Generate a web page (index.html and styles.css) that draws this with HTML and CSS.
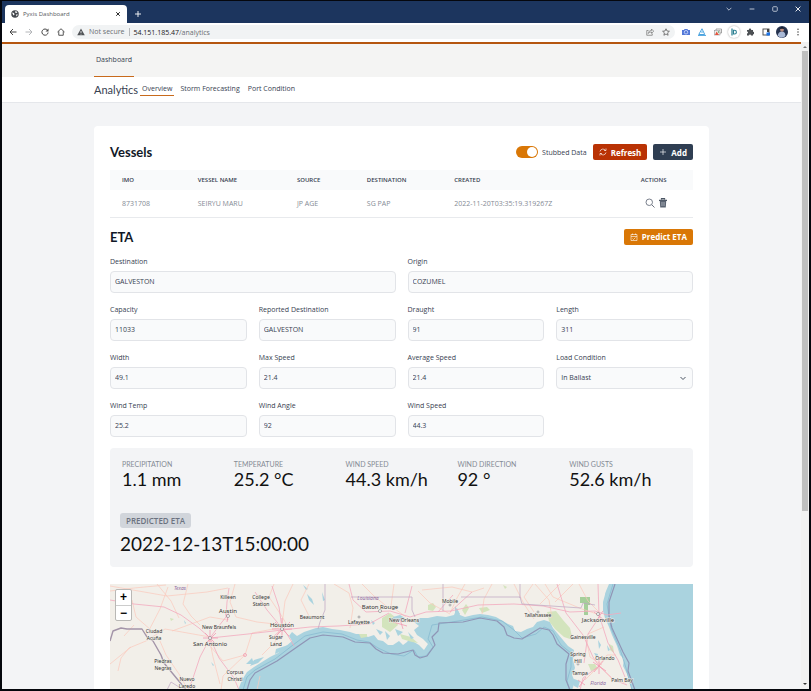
FILE: index.html
```html
<!DOCTYPE html>
<html lang="en">
<head>
    <meta charset="UTF-8">
    <meta name="viewport" content="width=device-width, initial-scale=1.0">
    <title>Pyxis Dashboard</title>
    <link rel="stylesheet" href="styles.css">
</head>
<body>
    <div class="window">
        <!-- Title bar -->
        <div class="titlebar">
            <div class="tab">
                <svg class="icon" viewBox="0 0 16 16"><circle cx="8" cy="8" r="7.500" fill="#45494e"/><path d="M2 5l4 1 1 3-2 2zM9 2l-1 3 3 1 2-2M10 9l4 0-3 4z" fill="#fff"/></svg>
                <span class="tab-title">Pyxis Dashboard</span>
                <button class="plain" aria-label="Close tab"><svg class="icon-sm" viewBox="0 0 10 10"><path d="M2 2l6 6M8 2l-6 6" stroke="#222" stroke-width="1.6"/></svg></button>
            </div>
            <button class="plain new-tab" aria-label="New tab"><svg class="icon-sm" viewBox="0 0 10 10"><path d="M5 0v10M0 5h10" stroke="#fff" stroke-width="1.5"/></svg></button>
            <div class="window-buttons">
                <button class="plain" aria-label="Tabs"><svg class="icon-sm" viewBox="0 0 10 10"><path d="M1 3l4 4 4-4" fill="none" stroke="#ccd3df" stroke-width="1.4"/></svg></button>
                <button class="plain" aria-label="Minimize"><svg class="icon-sm" viewBox="0 0 10 10"><path d="M1 5h8" stroke="#ccd3df" stroke-width="1.5"/></svg></button>
                <button class="plain" aria-label="Maximize"><svg class="icon-sm" viewBox="0 0 10 10"><rect x="1.2" y="1.2" width="7.6" height="7.6" rx="1.5" fill="none" stroke="#ccd3df" stroke-width="1.4"/></svg></button>
                <button class="plain" aria-label="Close"><svg class="icon-sm" viewBox="0 0 10 10"><path d="M1 1l8 8M9 1l-8 8" stroke="#fff" stroke-width="1.5"/></svg></button>
            </div>
        </div>

        <!-- Address bar -->
        <div class="toolbar">
            <div class="toolbar-nav">
                <button class="plain" aria-label="Back"><svg class="icon" viewBox="0 0 16 16"><path d="M15 8H2M8 2L2 8l6 6" fill="none" stroke="#444" stroke-width="2"/></svg></button>
                <button class="plain" aria-label="Forward"><svg class="icon" viewBox="0 0 16 16"><path d="M1 8h13M8 2l6 6-6 6" fill="none" stroke="#b4b6b9" stroke-width="2"/></svg></button>
                <button class="plain" aria-label="Reload"><svg class="icon" viewBox="0 0 16 16"><path d="M13 4.5A6.2 6.2 0 1 0 14.2 9" fill="none" stroke="#444" stroke-width="2"/><path d="M15 1v6H9z" fill="#444"/></svg></button>
                <button class="plain" aria-label="Home"><svg class="icon" viewBox="0 0 16 16"><path d="M1 8l7-6.5L15 8M3.5 6.5V14.5h9V6.500" fill="none" stroke="#444" stroke-width="1.8"/></svg></button>
            </div>
            <div class="address">
                <svg class="icon" viewBox="0 0 16 16"><path d="M8 1l7.500 13.500H.5z" fill="#505356"/><path d="M8 6v4M8 11.500v1.500" stroke="#fff" stroke-width="1.500"/></svg>
                <span class="insecure">Not secure</span>
                <span class="url"><b>54.151.185.47</b>/analytics</span>
                <button class="plain" aria-label="Share"><svg class="icon" viewBox="0 0 16 16"><path d="M5 5H1.500v9.500h11V11M4.500 11c0-4 3-6 6.500-6V2l4.500 4.500L11 10.500V8C8 8 6 9 4.500 11z" fill="none" stroke="#666" stroke-width="1.300"/></svg></button>
                <button class="plain star" aria-label="Bookmark"><svg class="icon" viewBox="0 0 16 16"><path d="M8 1.500l2 4.500 4.800.5-3.600 3.200 1 4.800L8 12l-4.200 2.500 1-4.800L1.200 6.500 6 6z" fill="none" stroke="#555" stroke-width="1.500"/></svg></button>
            </div>
            <div class="extensions">
                <svg class="icon" viewBox="0 0 16 16"><path d="M0 4h4l1-2h6l1 2h4v10H0z" fill="#5479d8"/><circle cx="8" cy="8.500" r="3.500" fill="none" stroke="#dce5ff" stroke-width="1.500"/></svg>
                <svg class="icon" viewBox="0 0 16 16"><path d="M8 1.500L1.500 13h12z" fill="none" stroke="#4aa3df" stroke-width="2"/><path d="M8 6v4M0 15h16" stroke="#4aa3df" stroke-width="1.800"/></svg>
                <svg class="icon" viewBox="0 0 16 16"><path d="M4 5V2h11v8h-3" fill="none" stroke="#888" stroke-width="1.500"/><rect x="1" y="5" width="11" height="9" fill="#eee" stroke="#888"/><path d="M2 14l3-7 5 7z" fill="#e5533d"/><circle cx="9" cy="8" r="1.500" fill="#4f9d54"/></svg>
                <span class="round"><svg class="icon" viewBox="0 0 16 16"><path d="M4 1v14" stroke="#2b7f91" stroke-width="2.500"/><path d="M7 4.500h2a3.800 3.800 0 0 1 0 7.600H7z" fill="none" stroke="#2b7f91" stroke-width="2.200"/></svg></span>
                <svg class="icon" viewBox="0 0 16 16"><path d="M2 4h4a2.200 2.200 0 1 1 4 0h4v4a2.200 2.200 0 1 1 0 4v3h-4a2 2 0 1 0-4 0H2v-4a2 2 0 1 0 0-4z" fill="#4c5054"/></svg>
                <svg class="icon" viewBox="0 0 16 16"><rect x="2" y="2" width="12" height="12" fill="none" stroke="#444" stroke-width="1.800"/><path d="M10 2h4v6h-4z" fill="#444"/><path d="M9 9h7v6H9z" fill="#1a73e8"/></svg>
                <svg class="avatar" viewBox="0 0 22 22"><circle cx="11" cy="11" r="11" fill="#26334f"/><path d="M3 18c1-6 4-8 8-8s7 3 6 9a11 11 0 0 1-14-1z" fill="#a9b9d6"/><circle cx="11" cy="7" r="3.500" fill="#b98d80"/><path d="M7 5c2-4 7-3 8 0z" fill="#111827"/></svg>
                <svg class="icon dots" viewBox="0 0 16 16"><circle cx="8" cy="2.500" r="1.600"/><circle cx="8" cy="8" r="1.600"/><circle cx="8" cy="13.500" r="1.600"/></svg>
            </div>
        </div>

        <div class="viewport">
            <div class="page">
                <nav class="main-nav"><a href="#" class="active">Dashboard</a></nav>
                <nav class="sub-nav">
                    <h1>Analytics</h1>
                    <a href="#" class="active">Overview</a>
                    <a href="#">Storm Forecasting</a>
                    <a href="#">Port Condition</a>
                </nav>

                <main class="card">
                    <div class="section-head">
                        <h2>Vessels</h2>
                        <label class="toggle"><input type="checkbox" checked>Stubbed Data</label>
                        <button class="btn red"><svg class="btn-icon" viewBox="0 0 16 16"><path d="M2 7a6 6 0 0 1 11-2M14 1v4h-4M14 9a6 6 0 0 1-11 2M2 15v-4h4" fill="none" stroke="#fff" stroke-width="1.300"/></svg>Refresh</button>
                        <button class="btn navy"><svg class="btn-icon" viewBox="0 0 16 16"><path d="M8 2v12M2 8h12" stroke="#fff" stroke-width="1.300"/></svg>Add</button>
                    </div>

                    <table class="vessels">
                        <thead>
                            <tr>
                                <th class="col-imo">IMO</th>
                                <th class="col-name">Vessel Name</th>
                                <th class="col-source">Source</th>
                                <th class="col-destination">Destination</th>
                                <th class="col-created">Created</th>
                                <th>Actions</th>
                            </tr>
                        </thead>
                        <tbody>
                            <tr>
                                <td>8731708</td>
                                <td>SEIRYU MARU</td>
                                <td>JP AGE</td>
                                <td>SG PAP</td>
                                <td>2022-11-20T03:35:19.319267Z</td>
                                <td>
                                    <div class="actions">
                                        <button class="plain" aria-label="View"><svg class="action-icon" viewBox="0 0 20 20"><circle cx="8.500" cy="8.500" r="6.500" fill="none" stroke="#6b7280" stroke-width="1.800"/><path d="M13.500 13.500L19 19" stroke="#6b7280" stroke-width="2"/></svg></button>
                                        <button class="plain" aria-label="Delete"><svg class="action-icon" viewBox="0 0 20 20"><path d="M7 3V1h6v2M2 4.500h16" fill="none" stroke="#4b5563" stroke-width="2.500"/><path d="M3.500 5h13l-1 14h-11z" fill="#5b6472"/><path d="M7.500 8v8M10 8v8M12.500 8v8" stroke="#c5cad1"/></svg></button>
                                    </div>
                                </td>
                            </tr>
                        </tbody>
                    </table>

                    <div class="section-head">
                        <h2>ETA</h2>
                        <button class="btn orange"><svg class="btn-icon" viewBox="0 0 16 16"><path d="M2 3h12v12H2zM2 7h12M5 1v3M11 1v3M5 11l2 2 4-4" fill="none" stroke="#fff" stroke-width="1.200"/></svg>Predict ETA</button>
                    </div>

                    <form class="eta-form">
                        <div class="field wide"><label for="destination">Destination</label><input id="destination" type="text" value="GALVESTON"></div>
                        <div class="field wide"><label for="origin">Origin</label><input id="origin" type="text" value="COZUMEL"></div>
                        <div class="field"><label for="capacity">Capacity</label><input id="capacity" type="text" value="11033"></div>
                        <div class="field"><label for="reported">Reported Destination</label><input id="reported" type="text" value="GALVESTON"></div>
                        <div class="field"><label for="draught">Draught</label><input id="draught" type="text" value="91"></div>
                        <div class="field"><label for="length">Length</label><input id="length" type="text" value="311"></div>
                        <div class="field"><label for="width">Width</label><input id="width" type="text" value="49.1"></div>
                        <div class="field"><label for="max-speed">Max Speed</label><input id="max-speed" type="text" value="21.4"></div>
                        <div class="field"><label for="avg-speed">Average Speed</label><input id="avg-speed" type="text" value="21.4"></div>
                        <div class="field">
                            <label for="load">Load Condition</label>
                            <div class="select-wrap">
                                <select id="load"><option>In Ballast</option><option>Laden</option></select>
                                <svg class="chevron" viewBox="0 0 10 10"><path d="M2.500 4l2.500 2.500L7.500 4" fill="none" stroke="#4b5563"/></svg>
                            </div>
                        </div>
                        <div class="field"><label for="wind-temp">Wind Temp</label><input id="wind-temp" type="text" value="25.2"></div>
                        <div class="field"><label for="wind-angle">Wind Angle</label><input id="wind-angle" type="text" value="92"></div>
                        <div class="field"><label for="wind-speed">Wind Speed</label><input id="wind-speed" type="text" value="44.3"></div>
                    </form>

                    <section class="results">
                        <dl class="stats">
                            <div><dt>Precipitation</dt><dd>1.1 mm</dd></div>
                            <div><dt>Temperature</dt><dd>25.2 °C</dd></div>
                            <div><dt>Wind Speed</dt><dd>44.3 km/h</dd></div>
                            <div><dt>Wind Direction</dt><dd>92 °</dd></div>
                            <div><dt>Wind Gusts</dt><dd>52.6 km/h</dd></div>
                        </dl>
                        <div class="prediction">
                            <span class="chip">Predicted ETA</span>
                            <p>2022-12-13T15:00:00</p>
                        </div>
                    </section>

                    <div class="map">
                        <svg class="map-canvas" viewBox="0 0 583 106" preserveAspectRatio="xMidYMin slice">
                            <rect width="583" height="106" fill="#aad3df"/>
                            <!-- land -->
                            <path d="M0 0H499L496 7 493 18 493 27 495 34 499 43 502 51 507 62 510 71 514 75 513 82 517 90 520 98 522 106H462L465 98 462 91 465 84 463 76 464 66 458 62 453 56 448 50 443 44 440 38 434 36 427 38 423 43 417 45 411 48 405 47 403 42 398 40 393 37 386 33 378 31 370 30 363 31 355 33 350 31 347 24 344 31 336 33 327 32 318 34 310 34 304 38 309 42 304 46 307 51 313 55 318 60 314 66 309 61 304 58 300 54 297 58 293 61 289 57 283 61 278 61 273 57 268 56 264 51 258 53 252 50 246 50 240 48 230 46 222 45 213 43 206 44 200 46 194 48 187 52 182 48 179 52 182 57 175 63 168 69 160 73 152 78 144 83 137 88 132 96 128 106H0z" fill="#f2efe9"/>
                            <!-- parks and wetlands -->
                            <g fill="#d3e4bd">
                                <path d="M437 28l9-1 7 9 7 8 3 12-9-3-9-8-6-8z"/>
                                <path d="M272 34l8-5 5 4 3 8-8 7-8-5zM318 21l5-2 3 4-3 4-5-1zM356 20l3 4-4 7-3-5zM369 24l8-1 3 3-8 3zM249 50l8 0 0 3-6 1zM290 50l11 3 7 6-6-1-10-3zM478 80l7 0 3 5-7 2zM499 60l4 2 1 7-4-3zM393 1l4 2-2 2zM60 34l4 1-3 2z"/>
                                <path d="M470 13h10v8h-2v10h-4V19h-4z" fill="#a5cf9a"/>
                            </g>
                            <!-- lakes and bays -->
                            <g fill="#aad3df">
                                <path d="M197 10l5 5 2 6-5-5zM212 8l3 8-2 1zM193 1l5 4-2 1zM261 36l4 3-2 2zM283 33l7-2 5 3-3 3-9-1zM345 22l5 8-5 1zM488 56l3 5-2 4zM497 61l3 5-2 1zM484 69l4 1-1 4zM495 8l3 8-3-1zM464 95l6 2-2 7-4-2zM266 45l7 3-3 3zM275 47l5 5-3 4zM285 45l8 3-5 4zM298 48l6 6-3 1zM166 65l12-4-4 5-9 4zM144 76l10-3-6 6-8 3zM136 80l6-6 2 6zM101 78l3 3-1 1zM74 36l2 3-1 1z"/>
                            </g>
                            <!-- near-shore line -->
                            <path d="M133 106l4-13 8-7 20-11 18-14 12-9 18-4 19 2 15 6 12 2 9 6 13 6 13 2 10-6 4 7 8-1 7-9-5-8 4-14 26-4 24-4 20 4 12 9 8 8 14-4 8-7 9 4 8 14 10 8 0 14-4 14 4 14M503 0l-6 20 4 24 10 24 5 16 6 22" fill="none" stroke="#8fc0d4"/>
                            <!-- maritime boundary -->
                            <path d="M137 106L140 96 145 89 167 77 187 63 200 54 213 51 233 53 245 58 260 59 266 65 273 69 288 70 303 66 305 71 310 74 317 72 325 61 322 53 328 47 329 39 353 38 370 34 387 37 394 43 397 51 404 54 412 55 430 44 439 46 443 51 447 60 459 70 456 80 456 96 460 106M505 0L499 18 499 32 502 44 513 68 519 79 518 87 525 106" fill="none" stroke="#8f95b6" stroke-width="1.200" stroke-linejoin="round"/>
                            <!-- roads -->
                            <g fill="none" stroke="#fac8bb" stroke-width=".7" stroke-linejoin="round">
                                <path d="M0 7L24 4 56 1M47 0l14 17 8 17M0 2l57 10 40-4 21-4M58 3l-8 22-14 27M78 0l-5 20 8 12 9 9M125 0l-5 18 6 15 21 5 27 3M164 0l-5 13 12 18 6 10M183 0l-8 17-3 24M224 0l15 9 4 15-3 20M252 0l12 12 17 14M199 0l-8 16 9 18M100 53L55 45 36 57 19 64 11 74 8 87M135 71l-22 6-13-15M135 71l7-22 27-5M135 71l-22 21-2 14M50 57l6 14 13 19 8 14M99 53l4 20 7 27M284 0l-3 22 15 11M312 6l30-3 20 5 12-4M340 30L320 19 308 7M355 0l-8 14-7 15M382 0l-8 15-2 15M404 0l10 20 10 15M423 0l-9 13 10 15M425 0l14 16 3 18M435 0l8 13 29 12 18 6M450 0l-20 20M463 0l-18 18M469 0l9 17 12 12M478 50l16-7M476 54l4 19 12 8M489 81l8-10 9 0M489 82l-14 14M489 81l13 14 14 4M152 71l13-13 4-11M147 106l3-14M62 47l38-14 18 3M0 80l21-17M24 41l-10 11M22 16l4 17 15 13"/>
                            </g>
                            <g fill="none" stroke="#f2aabe" stroke-width=".8" stroke-linejoin="round">
                                <path d="M0 16l24 4 30 3 17 8 18 13 11 10 38-4 34-4 28-3 28-1 31-2 20-11M100 54l8-11 8-10 1-15 2-14M100 54l9 20 15 20 5 12M100 54L90 73 82 97 78 106M172 44l-15-18-12-18M172 44l-3-21-7-21M173 44l7 11 4 7M173 44l-10 9M239 0l4 16 13 12 24-1 20 6 16-5 25-1 27-6 36-1 29 2 27 6 25-1 12 4 14-2M490 32L478 50 474 79M447 0l9 29 17 22 10 22 6 9M488 0l1 31 9 28 10 17 7 17M489 82l-16 12-3 12M489 82l15 14 13 5M302 2l-7 27M328 28l15-17M340 28l22-20"/>
                            </g>
                            <!-- city streets -->
                            <g fill="none" stroke="#f29ab2" stroke-width=".8">
                                <path d="M165 38l14 14M180 38l-14 14M172 34v20M162 45h20M95 49l11 11M106 49l-11 11M100 46v15M93 54h15M115 28l3 8M119 27l-2 11M484 28l10 8M493 27l-7 10M483 78l13 9M494 76l-10 12M489 73v17M468 96l7 5M476 93l-7 10M283 38l14 4M290 35l3 10"/>
                                <circle cx="135" cy="71" r="1.500"/>
                            </g>
                            <!-- borders -->
                            <g fill="none" stroke="#bda5c2" stroke-width="1" stroke-linejoin="round">
                                <path d="M0 57l3-10 8-3 6 1 15 0 5 8 6 4 8 14 3 8 14 17 9 11" stroke="#a394a8" stroke-width="1.400"/>
                                <path d="M215 0v26l-5 12-2 7M241 13h61v13l3 7M333 0v27M351 13h59l2 7 59 4 2-5 12 2M410 0v14M57 106l4-8 8 5" stroke-width=".7"/>
                            </g>
                            <g fill="#fff" stroke="#777" stroke-width=".6">
                                <circle cx="100" cy="54" r="1.500"/><circle cx="118" cy="32" r="1.500"/><circle cx="172" cy="45" r="1.500"/><circle cx="270" cy="27" r="1.500"/><circle cx="488" cy="30" r="1.500"/><circle cx="428" cy="28" r="1"/><circle cx="340" cy="21" r="1"/><circle cx="249" cy="33" r="1"/><circle cx="468" cy="80" r="1"/>
                            </g>
                            <g class="city">
                                <text x="118" y="15">Killeen</text>
                                <text x="151" y="15">College</text><text x="151" y="22">Station</text>
                                <text x="109" y="45">New Braunfels</text>
                                <text x="44" y="49">Ciudad</text><text x="44" y="56">Acuña</text>
                                <text x="166" y="55">Sugar</text><text x="166" y="62">Land</text>
                                <text x="202" y="35">Beaumont</text>
                                <text x="249" y="40">Lafayette</text>
                                <text x="294" y="38">New Orleans</text>
                                <text x="53" y="79">Piedras</text><text x="53" y="86">Negras</text>
                                <text x="77" y="97">Nuevo</text><text x="77" y="104">Laredo</text>
                                <text x="125" y="90">Corpus</text><text x="125" y="97">Christi</text>
                                <text x="340" y="19">Mobile</text>
                                <text x="428" y="33">Tallahassee</text>
                                <text x="473" y="55">Gainesville</text>
                                <text x="468" y="72">Spring</text><text x="468" y="79">Hill</text>
                                <text x="495" y="76">Orlando</text>
                                <text x="470" y="91">Tampa</text>
                                <text x="512" y="98">Palm Bay</text>
                            </g>
                            <g class="city big">
                                <text x="118" y="29">Austin</text>
                                <text x="172" y="43">Houston</text>
                                <text x="100" y="62">San Antonio</text>
                                <text x="270" y="25">Baton Rouge</text>
                                <text x="488" y="38">Jacksonville</text>
                            </g>
                            <g class="state">
                                <text x="70" y="6">Texas</text>
                                <text x="258" y="16">Louisiana</text>
                                <text x="488" y="101">Florida</text>
                            </g>
                        </svg>
                        <div class="map-zoom">
                            <button aria-label="Zoom in">+</button>
                            <button aria-label="Zoom out">−</button>
                        </div>
                    </div>
                </main>
            </div>
            <div class="scrollbar">
                <span class="arrow up"></span>
                <div class="thumb"></div>
                <span class="arrow down"></span>
            </div>
        </div>
    </div>
</body>
</html>
```

FILE: styles.css
```css
* {
    box-sizing: border-box;
}

body {
    margin: 0;
    background-color: #05070d;
    font-family: "Open Sans", sans-serif;
    font-size: 7px;
    color: #374151;
}

h1, h2, p, dl, dd {
    margin: 0;
}

h1, h2, .stats, .prediction p {
    font-family: Lato, "Open Sans", sans-serif;
}

svg {
    display: block;
}

a {
    color: inherit;
    text-decoration: none;
}

button, input, select {
    font: inherit;
    color: inherit;
    margin: 0;
}

.plain {
    padding: 0;
    border: none;
    background: none;
    cursor: pointer;
}

.icon { width: 8px; height: 8px; }
.icon-sm { width: 6px; height: 6px; }

/* Browser window */
.window {
    display: flex;
    flex-direction: column;
    height: 100vh;
    padding: 1px 2px 2px;
}

.titlebar {
    display: flex;
    align-items: flex-end;
    flex: none;
    height: 22px;
    padding-left: 3px;
    background-color: #1c355e;
}

.tab {
    display: flex;
    align-items: center;
    gap: 4px;
    width: 122px;
    height: 18px;
    padding: 0 6px;
    border-radius: 4px 4px 0 0;
    background-color: #fff;
}

.tab-title {
    flex: 1;
    font-size: 6px;
    color: #55585c;
}

.new-tab {
    padding: 6px 8px;
}

.window-buttons {
    display: flex;
    gap: 17px;
    margin-left: auto;
    padding: 0 8px 11px 0;
}

.toolbar {
    display: flex;
    align-items: center;
    flex: none;
    gap: 7px;
    height: 19px;
    padding: 0 7px 1px;
    background-color: #fff;
}

.toolbar-nav {
    display: flex;
    gap: 8px;
}

.address {
    display: flex;
    align-items: center;
    flex: 1;
    gap: 4px;
    height: 14px;
    padding: 0 5px;
    border-radius: 7px;
    background-color: #f1f3f4;
}

.insecure {
    padding-right: 4px;
    border-right: 1px solid #b5b8bb;
    line-height: 8px;
    color: #6a6e73;
}

.url {
    flex: 1;
    color: #6a6e73;
}

.url b {
    font-weight: normal;
    color: #202124;
}

.star {
    margin-left: 4px;
}

.extensions {
    display: flex;
    align-items: center;
    gap: 8px;
}

.round {
    margin: 0 -2px;
    padding: 2px;
    border-radius: 50%;
    box-shadow: 0 0 2px rgba(0, 0, 0, 0.4);
}

.avatar {
    width: 12px;
    height: 12px;
    margin: 0 -2px;
}

.dots {
    fill: #555;
}

.viewport {
    display: flex;
    flex: 1;
    min-height: 0;
}

.page {
    flex: 1;
    min-width: 0;
    overflow: hidden;
    border-top: 2px solid #b5560f;
    background-color: #f3f4f6;
}

.scrollbar {
    display: flex;
    flex-direction: column;
    align-items: center;
    gap: 3px;
    width: 8px;
    padding: 4px 0;
    background-color: #f1f1f1;
}

.thumb {
    width: 6px;
    height: 72%;
    background-color: #bfbfbf;
}

.arrow {
    border: 2px solid transparent;
}

.up { border-top: 0; border-bottom-color: #777; }
.down { border-bottom: 0; border-top-color: #333; margin-top: auto; }

/* Navigation */
.main-nav {
    display: flex;
    height: 33px;
    padding: 0 92px;
    background-color: #f4f4f3;
}

.main-nav a {
    padding: 0 2px;
    line-height: 32px;
}

.main-nav .active, .sub-nav .active {
    border-bottom: 1px solid #c86a1c;
}

.sub-nav {
    display: flex;
    align-items: center;
    gap: 8px;
    height: 26px;
    padding: 0 92px;
    border-bottom: 1px solid #e5e7eb;
    background-color: #fff;
}

.sub-nav h1 {
    margin-right: -6px;
    font-size: 11px;
    font-weight: normal;
}

.sub-nav a {
    line-height: 12px;
    border-bottom: 1px solid transparent;
}

.sub-nav .active {
    padding: 0 2px;
    margin-right: -2px;
}

/* Card */
.card {
    margin: 23px 92px;
    padding: 16px;
    border-radius: 4px;
    background-color: #fff;
}

.section-head {
    display: flex;
    align-items: center;
    gap: 6px;
    height: 20px;
}

.section-head h2 {
    margin-right: auto;
    font-size: 13px;
    font-weight: bold;
    color: #111827;
}

.toggle {
    display: flex;
    align-items: center;
    gap: 4px;
}

.toggle input {
    appearance: none;
    width: 22px;
    height: 12px;
    padding: 1px;
    border-radius: 6px;
    background-color: #d97706;
}

.toggle input::before {
    content: "";
    display: block;
    width: 10px;
    height: 10px;
    border-radius: 50%;
    background-color: #fff;
}

.toggle input:checked::before {
    margin-left: auto;
}

.btn {
    display: flex;
    align-items: center;
    gap: 4px;
    height: 16px;
    padding: 0 6px;
    border: none;
    border-radius: 2px;
    font-size: 8px;
    font-weight: bold;
    color: #fff;
    cursor: pointer;
}

.btn-icon { width: 8px; height: 8px; }
.red { background-color: #b93204; }
.navy { background-color: #2f3e52; }
.orange { background-color: #d97706; }

.vessels {
    width: 100%;
    margin: 8px 0 9px;
    table-layout: fixed;
    border-collapse: collapse;
    text-align: left;
}

.vessels th {
    height: 20px;
    padding: 0 0 0 12px;
    background-color: #f9fafb;
    font-size: 6px;
    font-weight: 600;
    text-transform: uppercase;
}

.vessels td {
    height: 27px;
    padding: 0 0 0 12px;
    border-bottom: 1px solid #e8eaed;
    color: #858b95;
}

.col-imo { width: 13%; }
.col-name { width: 17%; }
.col-source { width: 12%; }
.col-destination { width: 15%; }
.col-created { width: 32%; }

.actions {
    display: flex;
    gap: 3px;
    padding-left: 4px;
}

.action-icon { width: 10px; height: 10px; }

/* ETA form */
.eta-form {
    display: grid;
    grid-template-columns: repeat(4, 1fr);
    gap: 10px 12px;
    margin-top: 8px;
}

.wide {
    grid-column: span 2;
}

.field label {
    display: block;
    margin-bottom: 2px;
    line-height: 14px;
}

.field input, .field select {
    display: block;
    appearance: none;
    width: 100%;
    height: 22px;
    padding: 0 4px;
    border: 1px solid #e2e4e8;
    border-radius: 4px;
    background-color: #f9fafb;
}

.select-wrap {
    position: relative;
}

.chevron {
    position: absolute;
    top: 6px;
    right: 5px;
    width: 10px;
    height: 10px;
    pointer-events: none;
}

/* Results */
.results {
    margin: 11px 0 17px;
    padding: 12px;
    border-radius: 4px;
    background-color: #f3f4f6;
}

.stats {
    display: grid;
    grid-template-columns: repeat(5, 1fr);
}

.stats dt {
    line-height: 8px;
    text-transform: uppercase;
    color: #858b95;
}

.stats dd {
    font-size: 18px;
    line-height: 22px;
    color: #111;
}

.prediction {
    margin: 23px -2px 0;
}

.chip {
    display: block;
    width: fit-content;
    padding: 0 6px;
    border-radius: 3px;
    background-color: #d1d5db;
    font-size: 8px;
    line-height: 15px;
    font-weight: 600;
    text-transform: uppercase;
    color: #6b7280;
}

.prediction p {
    margin-top: 5px;
    font-size: 19px;
    line-height: 22px;
    color: #111;
}

/* Map */
.map {
    position: relative;
    overflow: hidden;
}

.map-canvas {
    width: 100%;
    min-height: 106px;
    font-family: "Noto Sans", sans-serif;
    text-anchor: middle;
}

.city { font-size: 5px; fill: #333; stroke: #f2efe9; stroke-width: 1px; paint-order: stroke; }
.big { font-size: 6px; }
.state { font-size: 5px; font-style: italic; fill: #8d6a9f; }

.map-zoom {
    position: absolute;
    top: 5px;
    left: 5px;
    border: 1px solid #b9b8b5;
    border-radius: 2px;
    background-color: #fff;
}

.map-zoom button {
    display: block;
    width: 15px;
    height: 15px;
    padding: 0;
    border: none;
    background: none;
    font: bold 12px/15px "Liberation Sans", sans-serif;
    color: #000;
    cursor: pointer;
}

.map-zoom button + button {
    border-top: 1px solid #ccc;
}
```
